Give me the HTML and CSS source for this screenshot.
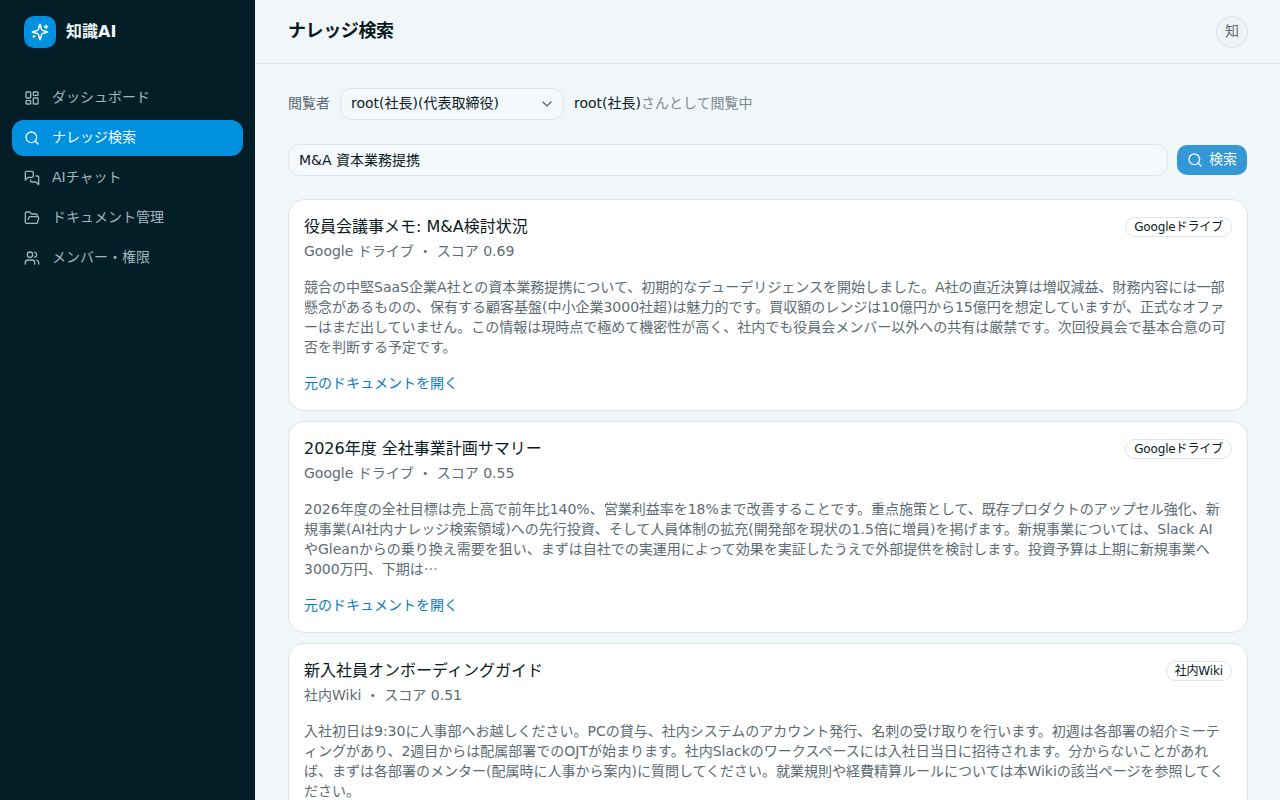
FILE: index.html
```html
<!DOCTYPE html>
<html lang="ja">
<head>
<meta charset="utf-8">
<title>ナレッジ検索</title>
<link rel="stylesheet" href="styles.css">
</head>
<body>
<div class="app">
  <aside class="sidebar">
    <div class="brand">
      <span class="logo">
        <svg viewBox="0 0 24 24" width="18" height="18" fill="none" stroke="#fff" stroke-width="2" stroke-linecap="round" stroke-linejoin="round"><path d="M9.937 15.5A2 2 0 0 0 8.5 14.063l-6.135-1.582a.5.5 0 0 1 0-.962L8.5 9.936A2 2 0 0 0 9.937 8.5l1.582-6.135a.5.5 0 0 1 .963 0L14.063 8.5A2 2 0 0 0 15.5 9.937l6.135 1.581a.5.5 0 0 1 0 .964L15.5 14.063a2 2 0 0 0-1.437 1.437l-1.582 6.135a.5.5 0 0 1-.963 0z"/><path d="M20 3v4M22 5h-4M4 17v2M5 18H3"/></svg>
      </span>
      <span class="brand-name">知識AI</span>
    </div>
    <nav class="nav">
      <a class="nav-item">
        <svg class="nav-icon" viewBox="0 0 24 24"><rect x="3" y="3" width="7" height="9" rx="1"/><rect x="14" y="3" width="7" height="5" rx="1"/><rect x="14" y="12" width="7" height="9" rx="1"/><rect x="3" y="16" width="7" height="5" rx="1"/></svg>
        <span class="nav-label">ダッシュボード</span>
      </a>
      <a class="nav-item active">
        <svg class="nav-icon" viewBox="0 0 24 24"><circle cx="11" cy="11" r="8"/><path d="m21 21-4.300-4.300"/></svg>
        <span class="nav-label">ナレッジ検索</span>
      </a>
      <a class="nav-item">
        <svg class="nav-icon" viewBox="0 0 24 24"><path d="M14 9a2 2 0 0 1-2 2H6l-4 4V4a2 2 0 0 1 2-2h8a2 2 0 0 1 2 2z"/><path d="M18 9h2a2 2 0 0 1 2 2v11l-4-4h-6a2 2 0 0 1-2-2v-1"/></svg>
        <span class="nav-label">AIチャット</span>
      </a>
      <a class="nav-item">
        <svg class="nav-icon" viewBox="0 0 24 24"><path d="m6 14 1.500-2.900A2 2 0 0 1 9.240 10H20a2 2 0 0 1 1.940 2.500l-1.540 6a2 2 0 0 1-1.950 1.500H4a2 2 0 0 1-2-2V5a2 2 0 0 1 2-2h3.900a2 2 0 0 1 1.690.9l.81 1.200a2 2 0 0 0 1.670.9H18a2 2 0 0 1 2 2v2"/></svg>
        <span class="nav-label">ドキュメント管理</span>
      </a>
      <a class="nav-item">
        <svg class="nav-icon" viewBox="0 0 24 24"><path d="M16 21v-2a4 4 0 0 0-4-4H6a4 4 0 0 0-4 4v2"/><circle cx="9" cy="7" r="4"/><path d="M22 21v-2a4 4 0 0 0-3-3.870"/><path d="M16 3.130a4 4 0 0 1 0 7.750"/></svg>
        <span class="nav-label">メンバー・権限</span>
      </a>
    </nav>
  </aside>
  <div class="main">
    <header class="topbar">
      <h1 class="page-title">ナレッジ検索</h1>
      <span class="avatar">知</span>
    </header>
    <div class="content">
      <div class="viewer-row">
        <span class="viewer-label">閲覧者</span>
        <div class="select">
          <span class="select-value">root(社長)(代表取締役)</span>
          <svg class="chevron" viewBox="0 0 24 24"><path d="m6 9 6 6 6-6"/></svg>
        </div>
        <span class="viewer-note"><span class="viewer-name">root(社長)</span>さんとして閲覧中</span>
      </div>
      <div class="search-row">
        <div class="search-input">M&amp;A 資本業務提携</div>
        <button class="search-btn">
          <svg class="btn-icon" viewBox="0 0 24 24"><circle cx="11" cy="11" r="8"/><path d="m21 21-4.300-4.300"/></svg>
          <span class="btn-label">検索</span>
        </button>
      </div>
      <div class="results">
        <article class="card">
          <div class="card-head">
            <h2 class="card-title">役員会議事メモ: M&amp;A検討状況</h2>
            <span class="badge">Googleドライブ</span>
          </div>
          <div class="card-meta">Google ドライブ ・ スコア 0.69</div>
          <p class="card-body">競合の中堅SaaS企業A社との資本業務提携について、初期的なデューデリジェンスを開始しました。A社の直近決算は増収減益、財務内容には一部懸念があるものの、保有する顧客基盤(中小企業3000社超)は魅力的です。買収額のレンジは10億円から15億円を想定していますが、正式なオファーはまだ出していません。この情報は現時点で極めて機密性が高く、社内でも役員会メンバー以外への共有は厳禁です。次回役員会で基本合意の可否を判断する予定です。</p>
          <a class="card-link">元のドキュメントを開く</a>
        </article>
        <article class="card">
          <div class="card-head">
            <h2 class="card-title">2026年度 全社事業計画サマリー</h2>
            <span class="badge">Googleドライブ</span>
          </div>
          <div class="card-meta">Google ドライブ ・ スコア 0.55</div>
          <p class="card-body">2026年度の全社目標は売上高で前年比140%、営業利益率を18%まで改善することです。重点施策として、既存プロダクトのアップセル強化、新規事業(AI社内ナレッジ検索領域)への先行投資、そして人員体制の拡充(開発部を現状の1.5倍に増員)を掲げます。新規事業については、Slack AI<br>やGleanからの乗り換え需要を狙い、まずは自社での実運用によって効果を実証したうえで外部提供を検討します。投資予算は上期に新規事業へ3000万円、下期は<span class="ellipsis">…</span></p>
          <a class="card-link">元のドキュメントを開く</a>
        </article>
        <article class="card">
          <div class="card-head">
            <h2 class="card-title">新入社員オンボーディングガイド</h2>
            <span class="badge">社内Wiki</span>
          </div>
          <div class="card-meta">社内Wiki ・ スコア 0.51</div>
          <p class="card-body">入社初日は9:30に人事部へお越しください。PCの貸与、社内システムのアカウント発行、名刺の受け取りを行います。初週は各部署の紹介ミーティングがあり、2週目からは配属部署でのOJTが始まります。社内Slackのワークスペースには入社日当日に招待されます。分からないことがあれば、まずは各部署のメンター(配属時に人事から案内)に質問してください。就業規則や経費精算ルールについては本Wikiの該当ページを参照してください。</p>
          <a class="card-link">元のドキュメントを開く</a>
        </article>
      </div>
    </div>
  </div>
</div>
</body>
</html>
```
FILE: styles.css
```css
* { box-sizing: border-box; }
html, body { margin: 0; height: 100%; overflow: hidden; }
body {
  font-family: "DejaVu Sans", "Noto Sans CJK JP", sans-serif;
  font-size: 14px;
  line-height: 20px;
  color: #0f172a;
  background: #f1f6f9;
}
.app { display: flex; height: 800px; }
.sidebar {
  width: 255px;
  flex: none;
  background: #041e27;
  padding: 16px 12px;
}
.brand { display: flex; align-items: center; gap: 10px; padding: 0 12px; height: 32px; margin-bottom: 32px; }
.logo {
  width: 32px; height: 32px; border-radius: 10px;
  background: #0090e0;
  display: flex; align-items: center; justify-content: center;
}
.brand-name { color: #eef6fa; font-size: 16px; font-weight: 700; }
.nav { display: flex; flex-direction: column; gap: 4px; }
.nav-item {
  display: flex; align-items: center; gap: 12px;
  height: 36px; padding: 0 12px;
  border-radius: 12px;
  color: #a3b4bc;
}
.nav-item.active { background: #0090e0; color: #f6fbfe; }
.nav-label { padding-bottom: 2px; }
.nav-icon {
  width: 16px; height: 16px; flex: none;
  fill: none; stroke: currentColor; stroke-width: 2; stroke-linecap: round; stroke-linejoin: round;
}
.main { flex: 1; min-width: 0; display: flex; flex-direction: column; }
.topbar {
  height: 64px; flex: none;
  display: flex; align-items: center; justify-content: space-between;
  padding: 0 32px;
  border-bottom: 1px solid #dde4e8;
}
.page-title { margin: 0 0 2px 1px; font-size: 18px; font-weight: 700; letter-spacing: -0.4px; color: #0a1a22; }
.avatar {
  width: 32px; height: 32px; border-radius: 50%;
  border: 1px solid #dde4e8;
  background: #eef3f5;
  color: #5c6b73;
  padding-bottom: 2px;
  display: flex; align-items: center; justify-content: center;
}
.content { padding: 24px 32px 0 33px; }
.viewer-row { display: flex; align-items: center; gap: 10px; height: 32px; margin-bottom: 24px; }
.viewer-label { color: #5c6b73; padding-bottom: 2px; }
.select {
  width: 224px; height: 32px;
  border: 1px solid #dde4e8; border-radius: 12px;
  background: #f4f8fb;
  padding: 0 8px 0 10px;
  display: flex; align-items: center; justify-content: space-between;
  color: #0a1a22;
}
.select-value { padding-bottom: 2px; }
.chevron { width: 16px; height: 16px; fill: none; stroke: #5c6b73; stroke-width: 2; stroke-linecap: round; stroke-linejoin: round; }
.viewer-note { color: #7c8a92; padding-bottom: 2px; }
.viewer-name { color: #0a1a22; }
.search-row { display: flex; align-items: center; gap: 9px; height: 32px; margin: 0 1px 23px 0; }
.search-input {
  flex: 1; height: 32px;
  border: 1px solid #dde4e8; border-radius: 12px;
  background: #f4f8fb;
  padding: 0 10px;
  display: flex; align-items: center;
  color: #0a1a22;
}
.search-btn {
  width: 70px; height: 30px; border: 0; border-radius: 10px;
  background: #3497d6; color: #f6fbfe;
  font: inherit;
  display: flex; align-items: center; justify-content: center; gap: 6px;
  padding: 0;
}
.btn-label { padding-bottom: 2px; }
.btn-icon { width: 16px; height: 16px; fill: none; stroke: currentColor; stroke-width: 2; stroke-linecap: round; stroke-linejoin: round; }
.results { display: flex; flex-direction: column; gap: 10px; }
.card {
  background: #fff;
  border: 1px solid #dde4e8;
  border-radius: 16px;
  padding: 16px 15px 15px;
  height: 212px;
  flex: none;
}
.card-head { display: flex; justify-content: space-between; align-items: flex-start; }
.card-title { margin: 0; font-size: 16px; line-height: 22px; font-weight: 400; color: #0a1a22; }
.badge {
  height: 20px; padding: 0 8px;
  border: 1px solid #dde4e8; border-radius: 10px;
  font-size: 12px; line-height: 18px; letter-spacing: -0.15px; color: #0a1a22;
  margin-top: 1px;
}
.card-meta { color: #5c6b73; margin-top: 3px; }
.card-body { margin: 16px 0 0; color: #5c6b73; }
.ellipsis { font-family: "Noto Sans CJK JP", sans-serif; line-height: 0; }
.card-link { display: block; margin-top: 16px; color: #0b7cc4; }
```
